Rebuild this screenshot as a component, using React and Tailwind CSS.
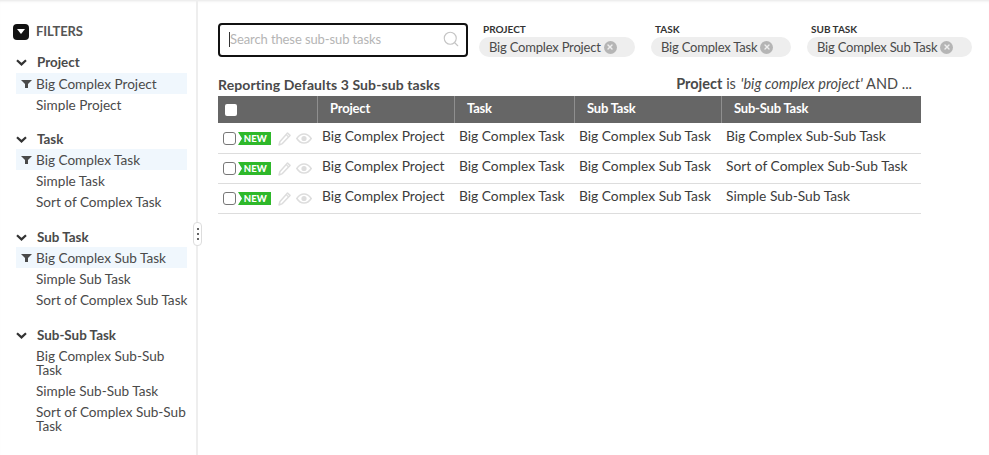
import React from "react";
import { Search, X } from "lucide-react";

const groups = [
  { title: "Project", mb: "mb-[13px]", head: "pt-0", items: [["Big Complex Project", true], ["Simple Project"]] },
  { title: "Task", mb: "mb-[14px]", head: "pt-[2px]", items: [["Big Complex Task", true], ["Simple Task"], ["Sort of Complex Task"]] },
  { title: "Sub Task", mb: "mb-[14px]", head: "pt-[2px]", items: [["Big Complex Sub Task", true], ["Simple Sub Task"], ["Sort of Complex Sub Task"]] },
  { title: "Sub-Sub Task", mb: "mb-0", head: "pt-[2px]", items: [["Big Complex Sub-Sub Task"], ["Simple Sub-Sub Task"], ["Sort of Complex Sub-Sub Task"]] },
];

const chips = [
  { label: "PROJECT", value: "Big Complex Project", w: "w-[156px]", mr: "mr-4" },
  { label: "TASK", value: "Big Complex Task", w: "w-[140px]", mr: "mr-4" },
  { label: "SUB TASK", value: "Big Complex Sub Task", w: "w-[165px]", mr: "" },
];

const rows = ["Big Complex Sub-Sub Task", "Sort of Complex Sub-Sub Task", "Simple Sub-Sub Task"];
const cols = "grid grid-cols-[99px_137px_120px_147px_200px]";

function Funnel() {
  return (
    <svg width="11" height="8" viewBox="0 0 11 8" className="absolute left-[5px] top-[7px]">
      <path d="M0 0H11L7 4V8H4V4Z" fill="#4a4a4a" />
    </svg>
  );
}

function Chevron() {
  return (
    <svg width="11" height="7" viewBox="0 0 11 7" className="mr-[10px] shrink-0">
      <path d="M1 1.2L5.5 5.4L10 1.2" fill="none" stroke="#333333" strokeWidth="2.2" />
    </svg>
  );
}

function PencilIcon() {
  return (
    <svg width="13" height="14" viewBox="0 0 13 14" className="ml-[7px] shrink-0">
      <path d="M9.5 1L12 3.4L4.4 11.6L1 13L2 9.4Z" fill="none" stroke="#dddddd" strokeWidth="1.5" strokeLinejoin="round" />
      <path d="M8.2 2.6L10.6 5" stroke="#dddddd" strokeWidth="1.2" />
    </svg>
  );
}

function EyeIcon() {
  return (
    <svg width="16" height="11" viewBox="0 0 16 11" className="ml-[5px] shrink-0">
      <path d="M0.8 5.5C3 2.2 5.4 1 8 1C10.6 1 13 2.2 15.2 5.5C13 8.8 10.6 10 8 10C5.4 10 3 8.8 0.8 5.5Z" fill="none" stroke="#dddddd" strokeWidth="1.5" />
      <circle cx="8" cy="5.5" r="2.6" fill="#dddddd" />
    </svg>
  );
}

function NewBadge() {
  return (
    <span className="flex h-[13px] w-[33px] items-center justify-end bg-[#2eb82a] pr-[4px] text-[9.5px] font-black leading-none tracking-[0.1px] text-white [clip-path:polygon(0_0,100%_0,100%_100%,0_100%,4px_50%)]">
      NEW
    </span>
  );
}

export default function App() {
  return (
    <div className="flex h-[455px] w-[989px] overflow-hidden bg-white font-['Lato',sans-serif] text-[13.8px] text-[#4a4a4a] shadow-[inset_0_3px_3px_-2px_#e5e5e5]">
      <aside className="relative h-full w-[198px] shrink-0 border-r-2 border-[#eeeeee] pl-4 pt-[23px]">
        <div className="mb-[12px] -ml-[3px] flex h-[17px] items-center gap-[7px]">
          <span className="flex h-[16px] w-[16px] items-center justify-center rounded-[4px] bg-[#111111]">
            <svg width="8" height="5" viewBox="0 0 8 5"><path d="M0 0H8L4 5Z" fill="#fff" /></svg>
          </span>
          <span className="text-[13px] font-bold tracking-[-0.1px] text-[#555555]">FILTERS</span>
        </div>
        {groups.map((g) => (
          <div key={g.title} className={g.mb}>
            <div className={`flex h-[21px] items-center text-[13.4px] font-bold ${g.head}`}>
              <Chevron />
              <span>{g.title}</span>
            </div>
            {g.items.map(([name, on]) => (
              <div key={name} className={`relative w-[171px] py-[3.5px] pl-[20px] text-[13.6px] leading-[14px] ${on ? "bg-[#f0f7fd]" : ""}`}>
                {on && <Funnel />}
                <span className="-mr-[2px] block">{name}</span>
              </div>
            ))}
          </div>
        ))}
        <div className="absolute right-[-6px] top-[222px] flex h-[24px] w-[9px] flex-col items-center justify-center gap-[3px] rounded-[4px] border border-[#dddddd] bg-white">
          <i className="h-[2px] w-[2px] rounded-full bg-[#333333]" />
          <i className="h-[2px] w-[2px] rounded-full bg-[#333333]" />
          <i className="h-[2px] w-[2px] rounded-full bg-[#333333]" />
        </div>
      </aside>

      <main className="pl-[20px] pt-[23px]">
        <div className="flex items-start">
          <div className="flex h-[34px] w-[250px] items-center justify-between rounded-[4px] border-2 border-[#111111] pb-[2px] pl-[9px] pr-[6px]">
            <span className="border-l border-[#333333] text-[13px] leading-[15px] tracking-[-0.1px] text-[#b5b5b5]">Search these sub-sub tasks</span>
            <Search size={18} strokeWidth={1.5} className="text-[#c4c4c4]" />
          </div>
          <div className="ml-[11px] flex">
            {chips.map((c) => (
              <div key={c.label} className={c.mr}>
                <div className="mb-[2px] ml-[4px] text-[10px] font-bold leading-[12px] text-[#333333]">{c.label}</div>
                <div className={`flex h-[20px] items-center rounded-full bg-[#eeeeee] pl-[10px] ${c.w}`}>
                  <span className="text-[13px] leading-none tracking-[-0.2px]">{c.value}</span>
                  <span className="ml-[3px] flex h-[13px] w-[13px] items-center justify-center rounded-full bg-[#b5b5b5]">
                    <X size={8} strokeWidth={4} className="text-[#eeeeee]" />
                  </span>
                </div>
              </div>
            ))}
          </div>
        </div>

        <div className="mt-[19px] flex h-[16px] w-[703px] items-center justify-between">
          <span className="text-[14px] font-bold tracking-[0.1px]">Reporting Defaults 3 Sub-sub tasks</span>
          <span className="pr-[9px] text-[14.5px]"><b>Project</b> is <i className="ml-px">'big complex project'</i> AND ...</span>
        </div>

        <div className={`${cols} mb-px mt-[4px] h-[27px] w-[703px] items-stretch bg-[#666666] text-[13px] font-bold tracking-[-0.2px] text-white`}>
          <div className="flex items-center pl-[7px]"><span className="h-[12px] w-[12px] rounded-[2px] bg-white" /></div>
          {["Project", "Task", "Sub Task", "Sub-Sub Task"].map((h) => (
            <div key={h} className="flex items-center border-l border-[#8f8f8f] pb-[2px] pl-[12px]">{h}</div>
          ))}
        </div>

        {rows.map((r) => (
          <div key={r} className={`${cols} h-[30px] w-[703px] items-center border-b border-[#dddddd] text-[#3c3c3c]`}>
            <div className="flex items-center pl-[5px]">
              <span className="h-[13px] w-[13px] shrink-0 rounded-[3px] border border-[#777777] bg-white" />
              <span className="ml-[2px]"><NewBadge /></span>
              <PencilIcon />
              <EyeIcon />
            </div>
            <div className="pb-[5px] pl-[5px]">Big Complex Project</div>
            <div className="pb-[5px] pl-[5px]">Big Complex Task</div>
            <div className="pb-[5px] pl-[5px]">Big Complex Sub Task</div>
            <div className="pb-[5px] pl-[5px]">{r}</div>
          </div>
        ))}
      </main>
    </div>
  );
}
